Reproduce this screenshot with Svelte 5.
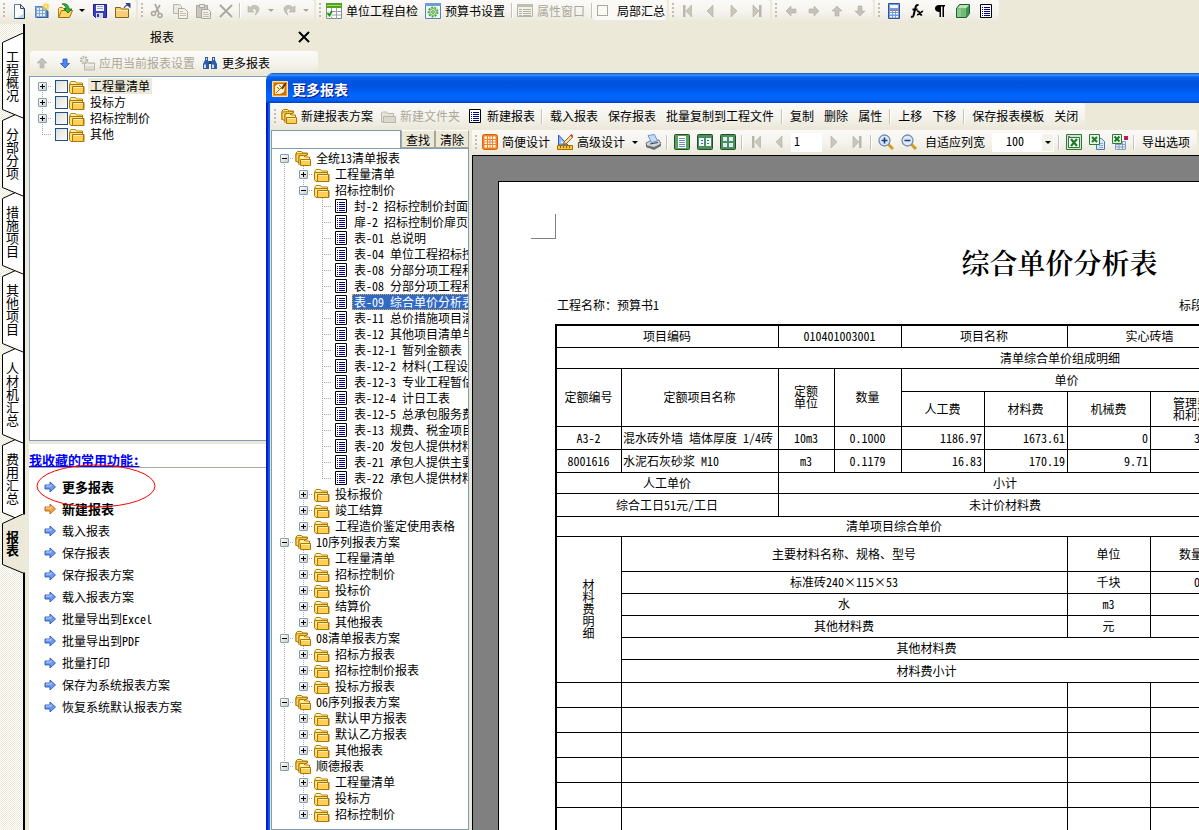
<script lang="ts">
	// 16x16 toolbar glyphs
	const icons = {
		page: '<path d="M3.500 1.500h6l4 4v10h-10z" fill="#fff" stroke="#5b7ba8"/><path d="M12 6h1v9H6l6-4z" fill="#b9d3f2"/><path d="M9.500 1.500v4h4z" fill="#dce9f8" stroke="#33486b"/><path d="M13.500 6v9.500h-10" fill="none" stroke="#24344f"/>',
		book: '<path d="M1 3h11v11H1z" fill="#7fa6d8"/><path d="M1.500 3.500h11v11h-11z" fill="none" stroke="#5d86bf"/><path d="M3 5h2v2H3zm3 0h2v2H6zM3 8h2v2H3zm3 0h2v2H6zm3 0h2v2H9zm-6 3h2v2H3zm3 0h2v2H6zm3 0h2v2H9z" fill="#e6f0fb"/><path d="M13 7l1.500 1v7H3v-1h10z" fill="#3c5f96"/><path d="M12 0v7M8.500 3.500h7M9.500 1l5 5m0-5l-5 5" stroke="#ffcf3a" stroke-width="1.300"/><path d="M11 2.500h2v2h-2z" fill="#fff7b0"/>',
		open: '<path d="M1.500 14.500v-9l1-1h3l1 1h5v2" fill="#ffe680" stroke="#b07a10"/><path d="M1.500 14.500l3-7h11l-3 7z" fill="#ffd766" stroke="#a86f00"/><path d="M5 1c4-1 7 1 7 5h3l-4 4-4-4h2c0-2-1-4-4-5z" fill="#35b23b" stroke="#116b1c" stroke-width=".8"/>',
		save: '<path d="M1.500 1.500h13v13h-11l-2-2z" fill="#3a40b5" stroke="#1c2288"/><path d="M4 2h8v6H4z" fill="#f4f5ff"/><path d="M5 3.500h6M5 5.500h6" stroke="#9aa0dd"/><path d="M4 10h7v5H4z" fill="#d5d9f5"/><path d="M5 11h2v3H5z" fill="#2a2f9b"/>',
		saveas: '<path d="M.5 14.500v-10h5l1 1.500h7v8.500z" fill="#f7cf72" stroke="#8a6414"/><path d="M1 7h12v1H1z" fill="#fff0bd"/><path d="M9 5c1-2 2-3 4-3m-2-1.500h4v4z" fill="#24477c" stroke="#24477c"/>',
		cut: '<path d="M6 1l4 9M11 2L6 10" stroke="#aaa89c" stroke-width="1.800"/><circle cx="4.500" cy="10.500" r="2" fill="none" stroke="#aaa89c" stroke-width="1.600"/><circle cx="11" cy="12.500" r="2" fill="none" stroke="#aaa89c" stroke-width="1.600"/>',
		copy: '<path d="M1.500 1.500h6l2 2v7h-8z" fill="#eceae0" stroke="#b5b3a8"/><path d="M6.500 5.500h6l3 3v7h-9z" fill="#f4f3ec" stroke="#aaa89c"/><path d="M8 8.500h3M8 10.500h6M8 12.500h6" stroke="#c2c0b5"/>',
		paste: '<path d="M1.500 2.500h11v12h-11z" fill="#c9c7bc" stroke="#aaa89c"/><path d="M4.500 1.500h5v3h-5z" fill="#eceae0" stroke="#aaa89c"/><path d="M6.500 6.500h7l2 2v7h-9z" fill="#f1f0e8" stroke="#aaa89c"/><path d="M8 9.500h5M8 11.500h6M8 13.500h6" stroke="#c2c0b5"/>',
		del: '<path d="M2 2l12 12M14 2L2 14" stroke="#aaa89c" stroke-width="1.800"/>',
		undo: '<path d="M2 3v6h6l-2-2c3-3 6 0 3 5 6-4 5-10-1-9.500-1.500 0-3 1-4 2z" fill="#c6c4ba" stroke="#aeaca0" stroke-width=".6"/>',
		redo: '<path d="M14 3v6H8l2-2c-3-3-6 0-3 5C1 8 2 2 8 2.500c1.500 0 3 1 4 2z" fill="#c6c4ba" stroke="#aeaca0" stroke-width=".6"/>',
		check: '<path d="M.5.500h15v15H.500z" fill="#fff" stroke="#7f9080"/><path d="M0 0h16v5H0z" fill="#4fa51c"/><path d="M1 2h14v1H1z" fill="#a6dc78"/><path d="M.5 8.500h15m-15 3.500h15M5.500 5v11m5-11v11" stroke="#96a0a8"/><path d="M1 8h5v6H1z" fill="#d8f0c8"/><path d="M1.500 10l2 2.500L6 8" fill="none" stroke="#168818" stroke-width="1.600"/>',
		gear: '<path d="M.5.500h15v15H.500z" fill="#eef6fd" stroke="#5a80b4"/><path d="M0 0h16v3H0z" fill="#6d9cd6"/><circle cx="8" cy="9" r="4.600" fill="#d9f0d0" stroke="#4aa53c" stroke-width="1.600" stroke-dasharray="2 1.200"/><circle cx="8" cy="9" r="3.400" fill="none" stroke="#62b552"/><circle cx="8" cy="9" r="1.300" fill="#fff" stroke="#3a9630"/>',
		props: '<path d="M.5 1.500h15v12H.500z" fill="#f2f1ea" stroke="#b5b3a8"/><path d="M0 1h16v3H0z" fill="#c0beb3"/><path d="M2 6.500h3m1 0h8m-12 2h3m1 0h8m-12 2h3m1 0h8m-12 2h3m1 0h8" stroke="#b5b3a8"/>',
		first: '<path d="M3 2h2.500v12H3z" fill="#b9b7ad"/><path d="M11.500 2v12L6 8z" fill="#c9c7bd" stroke="#aeaca0" stroke-width=".6"/>',
		prev: '<path d="M10 2v12L4 8z" fill="#c9c7bd" stroke="#aeaca0" stroke-width=".6"/>',
		next: '<path d="M5 2v12l6-6z" fill="#c9c7bd" stroke="#aeaca0" stroke-width=".6"/>',
		last: '<path d="M10 2h2.500v12H10z" fill="#b9b7ad"/><path d="M4 2v12l6-6z" fill="#c9c7bd" stroke="#aeaca0" stroke-width=".6"/>',
		left: '<path d="M3 8l5-5v3h5v4H8v3z" fill="#c4c2b8" stroke="#b2b0a5" stroke-width=".6"/>',
		right: '<path d="M13 8L8 3v3H3v4h5v3z" fill="#c4c2b8" stroke="#b2b0a5" stroke-width=".6"/>',
		up: '<path d="M8 3l5 5h-3v5H6V8H3z" fill="#c4c2b8" stroke="#b2b0a5" stroke-width=".6"/>',
		down: '<path d="M8 13L3 8h3V3h4v5h3z" fill="#c4c2b8" stroke="#b2b0a5" stroke-width=".6"/>',
		downblue: '<path d="M8 13L3.500 8.500H6V4h4v4.500h2.500z" fill="#4f86ee" stroke="#2456c4" stroke-width=".8"/>',
		calc: '<path d="M2.500.500h11v15h-11z" fill="#6f9be0" stroke="#2e5299"/><path d="M4 2h8v3H4z" fill="#f1f6ff"/><path d="M4 7h2v2H4zm3 0h2v2H7zm3 0h2v2h-2zm-6 3h2v1.500H4zm3 0h2v1.500H7zm3 0h2v1.500h-2zm-6 3h2v1.500H4zm3 0h2v1.500H7zm3 0h2v1.500h-2z" fill="#fff"/><path d="M4 7h2v1H4zm3 0h2v1H7zm3 0h2v1h-2z" fill="#e4523c"/>',
		fx: '<path d="M9.500 2.500c-1.500-1-2.500 0-3 2l-2 8c-.5 1.500-1.500 1.500-2.500 1M3.500 6.500h5" fill="none" stroke="#000" stroke-width="2"/><path d="M8 8.500c1.500-1 2 0 2.500 1.500s1 2.500 2.500 1.500M14 8.500c-2-1-3 4-6 3" fill="none" stroke="#000" stroke-width="1.600"/>',
		pilcrow: '<path d="M13 2v1.500h-1V14h-1.500V3.500H9V14H7.500V9C4.500 9 3 7.500 3 5.500S4.500 2 7 2z" fill="#000"/>',
		cube: '<path d="M1.500 5.500l3-4h10v9l-3 4h-10z" fill="#3c9550" stroke="#1e5e30"/><path d="M2 5.500L5 2h9l-3 3.500z" fill="#bfe3b8"/><path d="M2 6h9v8H2z" fill="#6fba77"/><path d="M2 6h4v8H2z" fill="#8acb8e"/>',
		list: '<path d="M2.500 1.500h11v13h-11z" fill="#fff" stroke="#000"/><path d="M4 4.500h1m1 0H12m-8 2h1m1 0H12m-8 2h1m1 0H12m-8 2h1m1 0H12m-8 2h1m1 0H12" stroke="#00008b"/>',
		apply: '<path d="M5.500 15V7h3l1 1h6v7z" fill="#dedcd2" stroke="#b9b7ac"/><path d="M6 10h9" stroke="#fff"/><circle cx="5" cy="5" r="3" fill="#e9e7de" stroke="#b9b7ac" stroke-width="2.500" stroke-dasharray="1.500 1"/>',
		find: '<path d="M3 2h3v3l1 3v6H1V9l2-4zm7 0h3v3l2 4v5H9V8l1-3z" fill="#2f5ca8"/><path d="M6.500 6h3v3h-3z" fill="#1c3b74"/><path d="M2 9.500h2v3.500H2zm8 0h2v3.500h-2zM4 3h1v2H4zm7 0h1v2h-1z" fill="#cfe2fa"/>',
		folders: '<path d="M1 12V3L2.500 1.500h4L8 3h4.500v2" fill="#ffe88a" stroke="#b07a00"/><path d="M1 4v7l3 2V5.500h8V3.500z" fill="#ffd95c" stroke="#b07a00"/><path d="M4 15V7l1-1.500h3.500L10 7h4.500v2" fill="#fff0a6" stroke="#b07400"/><path d="M5.500 9.500h10v6h-10z" fill="#ffcf4f" stroke="#b07400"/><path d="M6 10.500h9" stroke="#fff0b5"/>',
		folder: '<path d="M1 14.500V5l1-1.500h4.500L7.500 5h6v3" fill="#fff3b0" stroke="#b8860b"/><path d="M.5 6.500h13v2h1.500v7H2L.500 13.500z" fill="#ffe27a" stroke="#b07400"/><path d="M3.500 8.500h11v7h-11z" fill="#ffcf5a" stroke="#b07400"/><path d="M4.500 9.500h9" stroke="#fff0b5"/>',
		folderoff: '<path d="M1.500 14V5l1-1h4l1 1.500h6V14z" fill="#e6e4da" stroke="#b9b7ac"/><path d="M3.500 8.500h12v6h-12z" fill="#dad8cd" stroke="#b9b7ac"/>',
		grid: '<rect x=".5" y=".5" width="15" height="15" rx="2" fill="#f58220" stroke="#d8650a"/><path d="M2.500 2.500h11v11h-11z" fill="#fff"/><path d="M2 5.500h12M2 8h12M2 10.500h12M5.500 2v12M8 2v12m2.500-12v12" stroke="#f58220"/>',
		design: '<path d="M1.500 1v10H11z" fill="#8fb6f2" stroke="#2b5ec4"/><path d="M4 6.500V9h2.500z" fill="#fff"/><path d="M.5 11.500h15v4H.500z" fill="#ffc530" stroke="#a86f00"/><path d="M3.500 12v2m3-2v2m3-2v2m3-2v2" stroke="#8a5a00"/><path d="M6.500 10.500l1-3L14 1l2 2-6.500 6.500z" fill="#f7d99a" stroke="#7b4a12" stroke-width=".8"/><path d="M13 1.500L14.500 0 16 1.500 14.500 3z" fill="#d8322a"/>',
		printer: '<path d="M1 9l4-2 9-1 2 4-7 4-7-1z" fill="#d5d7da" stroke="#6b6f76"/><path d="M3 1.500L9.500.500l3 6.500-6 1.500z" fill="#c3dcfa" stroke="#6f94c8"/><path d="M1 11l8 2 7-3v2l-7 4-8-3z" fill="#6b6f76"/><path d="M5 10l8-1.500" stroke="#41454c" stroke-width="1.200"/>',
		view1: '<rect x=".5" y=".5" width="15" height="15" rx="1" fill="#5aa05f" stroke="#1d5225"/><path d="M4 2h8v12H4z" fill="#fff"/><path d="M5 4.500h6m-6 2h6m-6 2h6m-6 2h6m-6 2h6" stroke="#6c90b8"/>',
		view2: '<rect x=".5" y=".5" width="15" height="15" rx="1" fill="#4c8f58" stroke="#1d5225"/><path d="M2 4h5v8H2zm7 0h5v8H9z" fill="#eef4ff"/><path d="M4 6.500h2m-2 3h2m4-3h2m-2 3h2" stroke="#456aa0"/>',
		view4: '<rect x=".5" y=".5" width="15" height="15" rx="1" fill="#4c8f58" stroke="#1d5225"/><path d="M3 3h4v4H3zm6 0h4v4H9zM3 9h4v4H3zm6 0h4v4H9z" fill="#dfeaff"/>',
		zoomin: '<path d="M10 10l5 5" stroke="#d49b1c" stroke-width="3"/><circle cx="6.500" cy="6.500" r="5.500" fill="#dceafd" stroke="#7a8da8" stroke-width="1.300"/><path d="M6.500 3.500v6m-3-3h6" stroke="#1f3d8a" stroke-width="1.700"/>',
		zoomout: '<path d="M10 10l5 5" stroke="#d49b1c" stroke-width="3"/><circle cx="6.500" cy="6.500" r="5.500" fill="#dceafd" stroke="#7a8da8" stroke-width="1.300"/><path d="M3.500 6.500h6" stroke="#1f3d8a" stroke-width="1.700"/>',
		excel: '<path d="M.5.500h15v15H.500z" fill="#cfe8cc" stroke="#2c7a35"/><path d="M2.500 3.500h11v10h-11z" fill="#fff" stroke="#2c7a35"/><path d="M5 5l6 7m0-7l-6 7" stroke="#1d7a2a" stroke-width="2.200"/><path d="M2 2h2v1H2z" fill="#e020c0"/>',
		excelpage: '<path d="M7.500 4.500h5l3 3v8h-8z" fill="#dce9fb" stroke="#4d76b5"/><path d="M10 9.500h4m-4 2h4m-4 2h4" stroke="#86a8d8"/><path d="M.5.500h10v10H.500z" fill="#eaf5e8" stroke="#2c7a35"/><path d="M3 3l5 5m0-5L3 8" stroke="#1d7a2a" stroke-width="2"/>',
		excelgrid: '<path d="M3.500 7.500h10v8h-10zm0 3h10m-10 2.500h10M7 7v8m3.500-8v8" fill="#e4edf8" stroke="#86a0c4"/><path d="M.5.500h9v9h-9z" fill="#eaf5e8" stroke="#2c7a35"/><path d="M2.500 2.500l5 5m0-5l-5 5" stroke="#1d7a2a" stroke-width="2"/><path d="M12 2h4v4h-4z" fill="#c2185b"/>',
		app: '<path d="M.5.500h15v15H.500z" fill="#f6a21c" stroke="#ffe0a0"/><path d="M2 2h12v12H2z" fill="#c96f06"/><path d="M3 13V5l3-2h5l-1 4 3-2-1 6-4 2z" fill="#fff3d2"/><path d="M4 12l7-7M5 6l3 3M7 4l3 3" stroke="#b56208"/><path d="M10 8l4-6" stroke="#5b2d00" stroke-width="1.500"/>',
		goto: '<path d="M3 6h5V3l5.500 5L8 13v-3H3z" fill="#6b9af0" stroke="#2a56b8" stroke-width=".9"/><path d="M4 7h5V5.500" fill="none" stroke="#c4d8fb"/>',
		gotohot: '<path d="M3 6h5V3l5.500 5L8 13v-3H3z" fill="#f4a648" stroke="#b3620c" stroke-width=".9"/><path d="M4 7h5V5.500" fill="none" stroke="#fde0b4"/>'
	};

	const topBars = [
		[{ icon: 'page', tip: '新建' }, { icon: 'book', tip: '新建工程' }, { icon: 'open', tip: '打开' }, { caret: true }, { icon: 'save', tip: '保存' }, { icon: 'saveas', tip: '另存为' }],
		[{ icon: 'cut', off: true }, { icon: 'copy', off: true }, { icon: 'paste', off: true }, { icon: 'del', off: true }, { sep: true }, { icon: 'undo', off: true }, { caret: true, off: true }, { icon: 'redo', off: true }, { caret: true, off: true }],
		[{ icon: 'check', text: '单位工程自检' }, { icon: 'gear', text: '预算书设置' }, { sep: true }, { icon: 'props', text: '属性窗口', off: true }, { sep: true }, { tick: '局部汇总' }],
		[{ icon: 'first', off: true }, { icon: 'prev', off: true }, { icon: 'next', off: true }, { icon: 'last', off: true }],
		[{ icon: 'left', off: true }, { icon: 'right', off: true }, { icon: 'up', off: true }, { icon: 'down', off: true }],
		[{ icon: 'calc' }, { icon: 'fx' }, { icon: 'pilcrow' }, { icon: 'cube' }, { icon: 'list' }]
	];

	const panelBar = [{ icon: 'up', off: true }, { icon: 'downblue' }, { icon: 'apply', text: '应用当前报表设置', off: true }, { icon: 'find', text: '更多报表' }];

	const dialogBar = [
		{ icon: 'folders', text: '新建报表方案' }, { icon: 'folderoff', text: '新建文件夹', off: true }, { icon: 'list', text: '新建报表' }, { sep: true },
		{ text: '载入报表' }, { text: '保存报表' }, { text: '批量复制到工程文件' }, { sep: true },
		{ text: '复制' }, { text: '删除' }, { text: '属性' }, { sep: true },
		{ text: '上移' }, { text: '下移' }, { sep: true },
		{ text: '保存报表模板' }, { text: '关闭' }
	];

	const previewBar = [
		{ icon: 'grid', text: '简便设计' }, { icon: 'design', text: '高级设计' }, { caret: true }, { icon: 'printer' }, { sep: true },
		{ icon: 'view1' }, { icon: 'view2' }, { icon: 'view4' }, { sep: true },
		{ icon: 'first', off: true }, { icon: 'prev', off: true }, { pageNo: true }, { icon: 'next', off: true }, { icon: 'last', off: true }, { sep: true },
		{ icon: 'zoomin' }, { icon: 'zoomout' }, { text: '自适应列宽' }, { zoom: true }, { sep: true },
		{ icon: 'excel' }, { icon: 'excelpage' }, { icon: 'excelgrid' }, { sep: true }, { text: '导出选项' }
	];

	const sideTabs = ['工程概况', '分部分项', '措施项目', '其他项目', '人材机汇总', '费用汇总', '报表'];
	let activeTab = $state(6);

	const reportGroups = ['工程量清单', '投标方', '招标控制价', '其他'];

	const favourites = ['更多报表', '新建报表', '载入报表', '保存报表', '保存报表方案', '载入报表方案', '批量导出到Excel', '批量导出到PDF', '批量打印', '保存为系统报表方案', '恢复系统默认报表方案'];

	const closed = (...names) => names.map((name) => ({ name, open: false, kids: [] }));
	const sheets = (...names) => names.map((name) => ({ name }));

	let schemes = $state([
		{
			name: '全统13清单报表',
			open: true,
			kids: [
				...closed('工程量清单'),
				{
					name: '招标控制价',
					open: true,
					kids: sheets(
						'封-2 招标控制价封面', '扉-2 招标控制价扉页', '表-01 总说明', '表-04 单位工程招标控', '表-08 分部分项工程和',
						'表-08 分部分项工程和', '表-09 综合单价分析表', '表-11 总价措施项目清', '表-12 其他项目清单与',
						'表-12-1 暂列金额表', '表-12-2 材料(工程设', '表-12-3 专业工程暂估', '表-12-4 计日工表', '表-12-5 总承包服务费',
						'表-13 规费、税金项目', '表-20 发包人提供材料', '表-21 承包人提供主要', '表-22 承包人提供材料'
					)
				},
				...closed('投标报价', '竣工结算', '工程造价鉴定使用表格')
			]
		},
		{ name: '10序列报表方案', open: true, kids: closed('工程量清单', '招标控制价', '投标价', '结算价', '其他报表') },
		{ name: '08清单报表方案', open: true, kids: closed('招标方报表', '招标控制价报表', '投标方报表') },
		{ name: '06序列报表方案', open: true, kids: closed('默认甲方报表', '默认乙方报表', '其他报表') },
		{ name: '顺德报表', open: true, kids: closed('工程量清单', '投标方', '招标控制价') }
	]);
	let selected = $state('表-09 综合单价分析表');

	// t: text, c: colspan, r: rowspan, a: alignment class
	const rows = [
		{ h: 22, cells: [{ t: '项目编码', c: 2 }, { t: '010401003001', c: 2 }, { t: '项目名称', c: 2 }, { t: '实心砖墙', c: 2 }, {}] },
		{ h: 21, cells: [{ t: '清单综合单价组成明细', c: 9 }] },
		{ h: 23, cells: [{ t: '定额编号', r: 2 }, { t: '定额项目名称', r: 2 }, { t: '定额\n单位', r: 2 }, { t: '数量', r: 2 }, { t: '单价', c: 4 }, {}] },
		{ h: 35, cells: [{ t: '人工费' }, { t: '材料费' }, { t: '机械费' }, { t: '管理费\n和利润' }, {}] },
		{ h: 23, cells: [{ t: 'A3-2' }, { t: '混水砖外墙 墙体厚度 1/4砖', a: 'start' }, { t: '10m3' }, { t: '0.1000' }, { t: '1186.97', a: 'end' }, { t: '1673.61', a: 'end' }, { t: '0', a: 'end' }, { t: '356.09', a: 'end' }, {}] },
		{ h: 23, cells: [{ t: '8001616' }, { t: '水泥石灰砂浆 M10', a: 'start' }, { t: 'm3' }, { t: '0.1179' }, { t: '16.83', a: 'end' }, { t: '170.19', a: 'end' }, { t: '9.71', a: 'end' }, {}, {}] },
		{ h: 21, cells: [{ t: '人工单价', c: 2 }, { t: '小计', c: 6 }, {}] },
		{ h: 23, cells: [{ t: '综合工日51元/工日', c: 2 }, { t: '未计价材料费', c: 6 }, {}] },
		{ h: 20, cells: [{ t: '清单项目综合单价', c: 8 }, {}] },
		{ h: 35, cells: [{ t: '材\n料\n费\n明\n细', r: 6 }, { t: '主要材料名称、规格、型号', c: 5 }, { t: '单位' }, { t: '数量' }, {}] },
		{ h: 22, cells: [{ t: '标准砖240×115×53', c: 5 }, { t: '千块' }, { t: '0.5616', a: 'end' }, {}] },
		{ h: 22, cells: [{ t: '水', c: 5 }, { t: 'm3' }, {}, {}] },
		{ h: 22, cells: [{ t: '其他材料费', c: 5 }, { t: '元' }, {}, {}] },
		{ h: 22, cells: [{ t: '其他材料费', c: 7 }, {}] },
		{ h: 23, cells: [{ t: '材料费小计', c: 7 }, {}] },
		...Array.from({ length: 8 }, () => ({ h: 25, cells: [{}, { c: 5 }, {}, {}, {}] }))
	];
	const columns = [65, 157, 56, 67, 83, 83, 83, 82, 332];

	const tabHeight = (name) => 34 + 13 * name.length;
</script>

{#snippet icon(name)}
	<svg class="icon" width="16" height="16" viewBox="0 0 16 16" aria-hidden="true">{@html icons[name]}</svg>
{/snippet}

{#snippet toolbar(items, grip = true)}
	<div class="bar" role="toolbar" tabindex="-1">
		{#if grip}<span class="grip"></span>{/if}
		{#each items as item}
			{#if item.sep}
				<span class="sep"></span>
			{:else if item.caret}
				<button class="caret" disabled={item.off} aria-label="更多"></button>
			{:else if item.tick}
				<label class="tick"><input type="checkbox" />{item.tick}</label>
			{:else if item.pageNo}
				<input class="page-no" value="1" aria-label="页码" />
			{:else if item.zoom}
				<span class="zoom">
					<select aria-label="缩放比例"><option>100</option></select>
					<i></i>
				</span>
			{:else}
				<button
					class="tool"
					class:labelled={item.icon && item.text}
					class:plain={!item.icon}
					disabled={item.off}
					aria-label={item.text ?? item.tip ?? item.icon}
				>
					{#if item.icon}{@render icon(item.icon)}{/if}
					{#if item.text}<span>{item.text}</span>{/if}
				</button>
			{/if}
		{/each}
	</div>
{/snippet}

{#snippet branch(nodes, guides)}
	{#each nodes as node, i}
		{@const last = i === nodes.length - 1}
		<li>
			<div class="row">
				{#each guides as on}
					<span class="guide" class:on></span>
				{/each}
				<span class="guide on elbow" class:last class:first={!guides.length && i === 0}>
					{#if node.kids}
						<button class="toggle" class:plus={!node.open} aria-label={node.name} onclick={() => (node.open = !node.open)}></button>
					{/if}
				</span>
				{@render icon(!node.kids ? 'list' : guides.length ? 'folder' : 'folders')}
				<button class="leaf" class:selected={node.name === selected} onclick={() => (selected = node.name)}>{node.name}</button>
			</div>
			{#if node.open && node.kids.length}
				<ul>{@render branch(node.kids, [...guides, !last])}</ul>
			{/if}
		</li>
	{/each}
{/snippet}

<div class="app">
	<header>
		{#each topBars as items}
			{@render toolbar(items)}
		{/each}
	</header>

	<div class="workspace">
		<nav>
			{#each sideTabs as name, i}
				{@const h = tabHeight(name)}
				<button class="tab" class:active={i === activeTab} style:height="{h}px" style:z-index={i === activeTab ? 20 : 10 - i} onclick={() => (activeTab = i)}>
					<svg width={i === activeTab ? 25 : 23} height={h} aria-hidden="true">
						<path d="M27 0H23L2.500 9.500V{h - 9.500}L23 {h - 1}H27" />
					</svg>
					<span>{name}</span>
				</button>
			{/each}
		</nav>

		<section class="panel">
			<div class="panel-head">
				<h2>报表</h2>
				<button aria-label="关闭">
					<svg width="12" height="12" viewBox="0 0 12 12"><path d="M1 1l10 10M11 1L1 11" stroke="#000" stroke-width="2" /></svg>
				</button>
			</div>
			{@render toolbar(panelBar, false)}
			<ul class="groups">
				{#each reportGroups as name, i}
					<li class="row">
						<span class="guide on elbow" class:first={i === 0} class:last={i === reportGroups.length - 1}>
							{#if i < reportGroups.length - 1}<button class="toggle plus" aria-label="展开{name}"></button>{/if}
						</span>
						<label>
							<input type="checkbox" />
							{@render icon('folder')}
							<span class:current={i === 0}>{name}</span>
						</label>
					</li>
				{/each}
			</ul>
			<div class="favourites">
				<h3><a href="#favourites">我收藏的常用功能:</a></h3>
				<ul>
					{#each favourites as name, i}
						<li class:strong={i < 2}>
							{@render icon(i === 1 ? 'gotohot' : 'goto')}
							<a href="#{name}">{name}</a>
						</li>
					{/each}
				</ul>
				<svg class="ring" width="120" height="44" aria-hidden="true"><ellipse cx="60" cy="22" rx="59" ry="21" /></svg>
			</div>
		</section>
	</div>

	<div class="window" role="dialog" aria-label="更多报表">
		<div class="titlebar">
			{@render icon('app')}
			<h1>更多报表</h1>
		</div>
		<div class="body">
			<div class="commands">{@render toolbar(dialogBar)}</div>
			<div class="split">
				<aside>
					<form onsubmit={(e) => e.preventDefault()}>
						<input aria-label="查找报表" />
						<button>查找</button>
						<button type="reset">清除</button>
					</form>
					<ul class="tree">{@render branch(schemes, [])}</ul>
				</aside>
				<main>
					<div class="preview-bar">{@render toolbar(previewBar)}</div>
					<div class="desk">
						<article>
							<div class="crop"></div>
							<div class="sheet">
								<h2>综合单价分析表</h2>
								<div class="meta"><span>工程名称：预算书1</span><span>标段：</span></div>
								<table>
									<colgroup>
										{#each columns as w}<col style:width="{w}px" />{/each}
									</colgroup>
									<tbody>
										{#each rows as row}
											<tr style:height="{row.h}px">
												{#each row.cells as cell}
													<td colspan={cell.c} rowspan={cell.r} class={cell.a}>{cell.t ?? ''}</td>
												{/each}
											</tr>
										{/each}
									</tbody>
								</table>
							</div>
						</article>
					</div>
				</main>
			</div>
		</div>
	</div>
</div>

<style>
	:global(body) {
		margin: 0;
	}

	.app {
		position: relative;
		display: flex;
		flex-direction: column;
		height: 100vh;
		overflow: hidden;
		background: #ece9d8;
		color: #000;
		font: 12px/16px "Noto Sans Mono CJK SC", "Noto Sans CJK SC", sans-serif;
	}

	button, input, select {
		font: inherit;
		color: inherit;
		box-sizing: border-box;
		margin: 0;
	}

	button {
		padding: 0;
		border: 0;
		background: none;
		white-space: nowrap;
	}

	ul {
		list-style: none;
		margin: 0;
		padding: 0;
	}

	h1, h2, h3 {
		margin: 0;
		font: inherit;
	}

	.icon {
		flex: none;
		display: block;
	}

	/* toolbars */
	header {
		flex: none;
		display: flex;
		gap: 2px;
		height: 24px;
	}

	.bar {
		display: flex;
		align-items: center;
		height: 23px;
		padding-right: 2px;
		background: linear-gradient(#fbfaf8, #f5f4ee 50%, #ebe7d9);
		border-radius: 0 3px 3px 0;
		white-space: nowrap;
	}

	header .bar {
		box-sizing: border-box;
		padding-bottom: 2px;
	}

	.grip {
		flex: none;
		width: 7px;
		height: 15px;
		background: repeating-linear-gradient(#c1beb0 0 2px, transparent 2px 4px) 3px 0 / 2px 100% no-repeat;
	}

	.sep {
		flex: none;
		width: 5px;
		height: 15px;
		background: linear-gradient(90deg, #c5c2b8 1px, #fff 1px) 2px 0 / 2px 100% no-repeat;
	}

	.tool {
		flex: none;
		display: flex;
		align-items: center;
		justify-content: center;
		width: 23px;
		height: 22px;
	}

	.tool.labelled {
		width: auto;
		gap: 4px;
		padding: 0 4px 0 3px;
	}

	.tool.plain {
		width: auto;
		padding: 0 5px;
	}

	.tool:disabled {
		color: #aca899;
	}

	.caret {
		flex: none;
		width: 12px;
		height: 22px;
		display: grid;
		place-items: center;
	}

	.caret::after, .zoom i::after {
		content: '';
		border: 3px solid transparent;
		border-top-color: #000;
		border-bottom: 0;
	}

	.caret:disabled::after {
		border-top-color: #aca899;
	}

	.tick {
		display: flex;
		align-items: center;
		gap: 9px;
		height: 19px;
		padding-left: 3px;
		background: #faf9f6;
	}

	.tick input {
		appearance: none;
		width: 11px;
		height: 11px;
		border: 1px solid #aca899;
	}

	.page-no {
		width: 31px;
		height: 19px;
		border: 0;
		padding: 0 3px 3px;
		background: #fff;
	}

	.zoom {
		position: relative;
		display: flex;
		margin: 0 2px;
	}

	.zoom select {
		appearance: none;
		width: 62px;
		height: 19px;
		padding: 0 14px 3px;
		border: 0;
		border-radius: 0;
		background: #fff;
	}

	.zoom i {
		position: absolute;
		right: 1px;
		top: 1px;
		bottom: 1px;
		width: 11px;
		display: grid;
		place-items: center;
		background: #f3f1e8;
		pointer-events: none;
	}

	/* side tabs */
	.workspace {
		flex: 1;
		min-height: 0;
		display: flex;
		gap: 4px;
	}

	nav {
		flex: none;
		box-sizing: border-box;
		width: 25px;
		padding-top: 9px;
		border-right: 2px solid #000;
		background: repeating-conic-gradient(#fff 0 25%, #ece9d8 0 50%) 0 0 / 2px 2px;
	}

	.tab {
		position: relative;
		display: flex;
		align-items: center;
		justify-content: center;
		width: 25px;
		margin-bottom: -8px;
		padding-bottom: 3px;
	}

	.tab svg {
		position: absolute;
		left: 0;
		top: 0;
		fill: #fff;
		stroke: #000;
	}

	.tab span {
		position: relative;
		width: 13px;
		font-size: 13px;
		line-height: 13px;
		white-space: normal;
		word-break: break-all;
	}

	.tab.active {
		font-weight: bold;
	}

	.tab.active svg {
		fill: #ece9d8;
	}

	/* report panel */
	.panel {
		display: flex;
		flex-direction: column;
		width: 289px;
	}

	.panel-head {
		display: flex;
		align-items: center;
		box-sizing: border-box;
		height: 27px;
		padding: 0 5px 2px 0;
	}

	.panel-head h2 {
		flex: 1;
		text-align: center;
	}

	.panel-head button {
		width: 18px;
		height: 18px;
		display: grid;
		place-items: center;
	}

	.panel > .bar {
		margin: 0 0 2px 1px;
		padding: 0;
		border-radius: 3px;
	}

	.groups {
		flex: 367 1 0;
		box-sizing: border-box;
		padding: 1px 3px;
		border: 1px solid #7f9db9;
		background: #fff;
	}

	.groups label {
		display: flex;
		align-items: center;
		gap: 1px;
		margin-left: 3px;
	}

	.groups label span {
		margin-left: 2px;
		padding: 0 2px;
	}

	.groups .current {
		background: #ece9d8;
	}

	.groups input {
		appearance: none;
		width: 13px;
		height: 13px;
		border: 1px solid #1c5180;
		background: linear-gradient(135deg, #dcdcd7, #fff);
	}

	.favourites {
		position: relative;
		flex: 384 1 0;
		margin-top: 3px;
		padding-top: 8px;
		background: #fff;
	}

	.favourites h3 {
		height: 15px;
		border-bottom: 1px solid #aca899;
		font-size: 13px;
		font-weight: bold;
	}

	.favourites h3 a {
		color: #00f;
	}

	.favourites ul {
		padding: 8px 0 0 13px;
	}

	.favourites li {
		display: flex;
		align-items: center;
		gap: 4px;
		height: 22px;
	}

	.favourites li a {
		color: #000;
		text-decoration: none;
	}

	.favourites .strong {
		font-size: 13px;
		font-weight: bold;
	}

	.ring {
		position: absolute;
		left: 7px;
		top: 20px;
		fill: none;
		stroke: #f00;
		pointer-events: none;
	}

	/* trees */
	.row {
		display: flex;
		align-items: center;
		height: 16px;
		white-space: nowrap;
	}

	.guide {
		position: relative;
		flex: none;
		display: grid;
		place-items: center;
		width: 19px;
		height: 16px;
	}

	.guide.on::before {
		content: '';
		position: absolute;
		left: 9px;
		top: 0;
		bottom: 0;
		width: 1px;
		background: repeating-linear-gradient(#aca899 0 1px, transparent 1px 2px);
	}

	.guide.last::before {
		bottom: 8px;
	}

	.guide.first::before {
		top: 8px;
	}

	.elbow::after {
		content: '';
		position: absolute;
		left: 9px;
		right: 0;
		top: 8px;
		height: 1px;
		background: repeating-linear-gradient(90deg, #aca899 0 1px, transparent 1px 2px);
	}

	.toggle {
		position: relative;
		z-index: 1;
		width: 9px;
		height: 9px;
		border: 1px solid #7b9ebd;
		border-radius: 1px;
		background: linear-gradient(#000, #000) 1px 3px / 5px 1px no-repeat, linear-gradient(135deg, #fff, #d2cec0);
	}

	.toggle.plus {
		background: linear-gradient(#000, #000) 1px 3px / 5px 1px no-repeat, linear-gradient(#000, #000) 3px 1px / 1px 5px no-repeat, linear-gradient(135deg, #fff, #d2cec0);
	}

	.tree {
		flex: 1;
		min-height: 0;
		overflow: hidden;
		padding: 1px 0 0 3px;
		border: 1px solid #7f9db9;
		background: #fff;
	}

	.tree .icon {
		margin: 0 3px 0 1px;
	}

	.leaf {
		height: 16px;
		padding: 0 2px;
		line-height: 16px;
	}

	.selected {
		background: #316ac5;
		color: #fff;
		outline: 1px dotted #e8a33c;
		outline-offset: -1px;
	}

	/* report manager window */
	.window {
		position: absolute;
		left: 266px;
		top: 73px;
		right: 0;
		bottom: 0;
		z-index: 30;
		display: flex;
		flex-direction: column;
		overflow: hidden;
		border-radius: 7px 0 0 0;
	}

	.titlebar {
		flex: none;
		display: flex;
		align-items: center;
		gap: 4px;
		height: 30px;
		padding: 2px 6px 0;
		box-sizing: border-box;
		background: linear-gradient(#0a50c8 0, #3d95ff 2px, #0a62ee 4px, #0053dd 9px, #0055e5 15px, #0066ff 22px, #0062f5 27px, #0040c4 30px);
		color: #fff;
		font-size: 14px;
		font-weight: bold;
	}

	.titlebar h1 {
		text-shadow: 1px 1px #0a1883;
	}

	.body {
		flex: 1;
		min-height: 0;
		display: flex;
		flex-direction: column;
		padding-left: 5px;
		background: linear-gradient(90deg, #0019cf 1px, #0831d9 2px, #166aee 3px, #0855dd 4px, #ece9d8 4px);
	}

	.body .sep {
		width: 6px;
	}

	.commands {
		flex: none;
		display: flex;
		height: 27px;
	}

	.commands .bar {
		height: 26px;
	}

	.split {
		flex: 1;
		min-height: 0;
		display: flex;
		gap: 3px;
	}

	aside {
		flex: none;
		display: flex;
		flex-direction: column;
		width: 198px;
	}

	form {
		display: flex;
		height: 18px;
	}

	form input {
		flex: 1;
		min-width: 0;
		padding: 0 2px;
		border: 1px solid #7f9db9;
		border-bottom: 0;
		background: #fff;
	}

	form button {
		width: 34px;
		border: 1px solid #aca899;
		border-top-color: #fff;
		background: #ece9d8;
		line-height: 15px;
	}

	main {
		flex: 1;
		min-width: 0;
		display: flex;
		flex-direction: column;
	}

	.preview-bar {
		flex: none;
		display: flex;
		overflow: hidden;
		height: 25px;
	}

	.preview-bar .bar {
		height: 24px;
	}

	.desk {
		flex: 1;
		min-height: 0;
		overflow: hidden;
		box-sizing: border-box;
		padding: 25px 0 0 25px;
		border: solid #000;
		border-width: 1px 0 0 1px;
		background: #808080;
	}

	article {
		width: 1124px;
		padding-top: 32px;
		border: 1px solid #000;
		background: #fff;
	}

	.crop {
		width: 24px;
		height: 24px;
		margin-left: 32px;
		border: solid #808080;
		border-width: 0 1px 1px 0;
	}

	.sheet {
		width: 1009px;
		margin-left: 56px;
		padding-bottom: 40px;
	}

	.sheet h2 {
		padding: 3px 0 15px;
		font-family: "Noto Serif CJK SC", "Noto Sans CJK SC", serif;
		font-size: 28px;
		font-weight: 600;
		line-height: 40px;
		text-align: center;
	}

	.meta {
		display: grid;
		grid-template-columns: 622px 1fr;
		padding: 0 2px 11px;
	}

	table {
		width: 1010px;
		table-layout: fixed;
		border-collapse: separate;
		border-spacing: 0;
		border: solid #000;
		border-width: 2px 0 0 2px;
	}

	td {
		box-sizing: border-box;
		padding: 0 2px 1px 1px;
		border: solid #000;
		border-width: 0 1px 1px 0;
		line-height: 12px;
		text-align: center;
		white-space: pre;
		overflow: hidden;
	}

	.start {
		text-align: left;
	}

	.end {
		text-align: right;
	}
</style>
